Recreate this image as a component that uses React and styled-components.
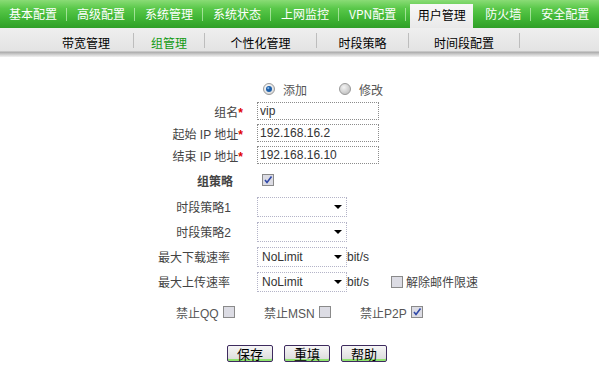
import React from 'react';
import styled, { createGlobalStyle } from 'styled-components';

const GlobalStyle = createGlobalStyle`
  body {
    margin: 0;
    background: #fff;
    font-family: "Liberation Sans", "Noto Sans CJK SC", sans-serif;
    font-size: 12px;
    color: #444;
  }
`;

const tabs = ['基本配置', '高级配置', '系统管理', '系统状态', '上网监控', 'VPN配置', '用户管理', '防火墙', '安全配置'];
const subs = [
  { name: '带宽管理', w: 133 },
  { name: '组管理', w: 70, on: true },
  { name: '个性化管理', w: 111 },
  { name: '时段策略', w: 91 },
  { name: '时间段配置', w: 110 },
];

export default function App() {
  return (
    <>
      <GlobalStyle />
      <TopBar>
        {tabs.map((t) =>
          t === '用户管理' ? (
            <ActiveTab key={t}>{t}</ActiveTab>
          ) : (
            <React.Fragment key={t}>
              <Tab $first={t === '防火墙'}>{t}</Tab>
              {t !== '安全配置' && <TabSep />}
            </React.Fragment>
          )
        )}
      </TopBar>
      <SubBar>
        {subs.map((s) => (
          <React.Fragment key={s.name}>
            <SubItem $w={s.w} $on={s.on}>{s.name}</SubItem>
            <SubSep />
          </React.Fragment>
        ))}
      </SubBar>

      <Form>
        <Row $h={18} $top={23}>
          <Label />
          <Controls $indent={20}>
            <Radio checked />
            <RadioText>添加</RadioText>
            <Spacer $w={32} />
            <Radio />
            <RadioText>修改</RadioText>
          </Controls>
        </Row>
        <Row $h={22} $top={2}>
          <Label>组名<Star>*</Star></Label>
          <Controls><TextInput defaultValue="vip" /></Controls>
        </Row>
        <Row $h={22}>
          <Label>起始 IP 地址<Star>*</Star></Label>
          <Controls><TextInput defaultValue="192.168.16.2" /></Controls>
        </Row>
        <Row $h={22}>
          <Label>结束 IP 地址<Star>*</Star></Label>
          <Controls><TextInput defaultValue="192.168.16.10" /></Controls>
        </Row>
        <Row $h={28}>
          <Label $pr={10} $bold>组策略</Label>
          <Controls $indent={19}><Check checked /></Controls>
        </Row>
        <Row $h={25}>
          <Label $pr={12}>时段策略1</Label>
          <Controls><Select value="" /></Controls>
        </Row>
        <Row $h={25}>
          <Label $pr={12}>时段策略2</Label>
          <Controls><Select value="" /></Controls>
        </Row>
        <Row $h={25}>
          <Label $pr={13}>最大下载速率</Label>
          <Controls>
            <Select value="NoLimit" />
            <Unit>bit/s</Unit>
          </Controls>
        </Row>
        <Row $h={25}>
          <Label $pr={13}>最大上传速率</Label>
          <Controls>
            <Select value="NoLimit" />
            <Unit>bit/s</Unit>
            <Spacer $w={22} />
            <Check />
            <CheckText>解除邮件限速</CheckText>
          </Controls>
        </Row>
        <BanRow>
          <BanItem>禁止QQ <Check /></BanItem>
          <BanItem>禁止MSN <Check /></BanItem>
          <BanItem>禁止P2P <Check checked /></BanItem>
        </BanRow>
        <ButtonRow>
          <Button>保存</Button>
          <Button>重填</Button>
          <Button>帮助</Button>
        </ButtonRow>
      </Form>
    </>
  );
}

function Radio({ checked }) {
  return (
    <svg width="12" height="12" viewBox="0 0 12 12">
      <defs>
        <radialGradient id={checked ? 'rOn' : 'rOff'} cx="40%" cy="35%" r="70%">
          <stop offset="0" stopColor={checked ? '#ffffff' : '#f4f4f4'} />
          <stop offset="1" stopColor={checked ? '#d6d6d6' : '#bdbdbd'} />
        </radialGradient>
      </defs>
      <circle cx="6" cy="6" r="5.5" fill={`url(#${checked ? 'rOn' : 'rOff'})`} stroke="#9a9a9a" />
      {checked && <circle cx="6" cy="6" r="3" fill="#1c5ea8" />}
      {checked && <circle cx="5.3" cy="5.2" r="1.1" fill="#7fb4e8" />}
    </svg>
  );
}

function Check({ checked }) {
  return (
    <CheckBox>
      {checked && (
        <svg width="10" height="10" viewBox="0 0 10 10">
          <path d="M2 5 L4 7.5 L8.5 1.5" fill="none" stroke="#2f48a8" strokeWidth="1.6" />
        </svg>
      )}
    </CheckBox>
  );
}

function Select({ value }) {
  return (
    <SelectBox>
      <span>{value}</span>
      <Arrow />
    </SelectBox>
  );
}

// CSS styles:

const TopBar = styled.div`
  display: flex;
  align-items: center;
  height: 28px;
  background: linear-gradient(#8adc76 0%, #5ac84a 30%, #40b535 65%, #2f9f27 100%);
`;

const Tab = styled.div`
  padding: 0 9px 0 ${(p) => (p.$first ? 10 : 10)}px;
  color: #fff;
  font-family: "Noto Sans CJK SC", sans-serif;
  font-size: 12px;
  line-height: 28px;
  white-space: nowrap;
  &:first-child {
    padding-left: 9px;
  }
`;

const TabSep = styled.div`
  width: 1px;
  height: 13px;
  background: rgba(230, 255, 220, 0.55);
`;

const ActiveTab = styled.div`
  align-self: stretch;
  display: flex;
  align-items: center;
  justify-content: center;
  margin: 4px 2px 0 4px;
  padding-bottom: 4px;
  width: 63px;
  box-sizing: border-box;
  background: linear-gradient(#f8f8f8, #e9e9e9);
  color: #000;
  font-family: "Noto Sans CJK SC", sans-serif;
  font-size: 12px;
`;

const SubBar = styled.div`
  display: flex;
  align-items: center;
  height: 29px;
  background: linear-gradient(
    to bottom,
    #efefef 0,
    #e3e3e3 23px,
    #aaaaaa 24px,
    #c9c9c9 26px,
    #f2f2f2 29px
  );
`;

const SubItem = styled.div`
  width: ${(p) => p.$w}px;
  padding-left: ${(p) => (p.$w > 120 ? 39 : 0)}px;
  box-sizing: border-box;
  text-align: center;
  padding-bottom: 1px;
  color: ${(p) => (p.$on ? '#129a12' : '#000')};
  font-family: "Noto Sans CJK SC", sans-serif;
  font-size: 12px;
`;

const SubSep = styled.div`
  width: 1px;
  height: 15px;
  margin-bottom: 4px;
  background: #bdbdbd;
`;

const Form = styled.div`
  display: flex;
  flex-direction: column;
`;

const Row = styled.div`
  display: flex;
  align-items: center;
  height: ${(p) => p.$h}px;
  margin-top: ${(p) => p.$top || 0}px;
`;

const Label = styled.div`
  width: 243px;
  box-sizing: border-box;
  padding-right: ${(p) => p.$pr || 0}px;
  text-align: right;
  white-space: nowrap;
  color: #444;
  font-weight: ${(p) => (p.$bold ? 'bold' : 'normal')};
`;

const Star = styled.span`
  color: #e00000;
  font-weight: bold;
`;

const Controls = styled.div`
  display: flex;
  align-items: center;
  margin-left: ${(p) => p.$indent || 14}px;
`;

const Spacer = styled.div`
  width: ${(p) => p.$w}px;
`;

const RadioText = styled.span`
  margin-left: 8px;
  color: #555;
`;

const TextInput = styled.input`
  width: 122px;
  height: 18px;
  box-sizing: border-box;
  border: 1px dotted #8c8c8c;
  padding: 0 2px;
  font-family: "Liberation Sans", sans-serif;
  font-size: 12px;
  color: #333;
  outline: none;
`;

const SelectBox = styled.div`
  display: flex;
  align-items: center;
  width: 90px;
  height: 20px;
  box-sizing: border-box;
  border: 1px dotted #b4b4c8;
  padding: 0 4px;
  color: #333;
  font-size: 12px;
`;

const Arrow = styled.span`
  margin-left: auto;
  width: 0;
  height: 0;
  border-left: 4px solid transparent;
  border-right: 4px solid transparent;
  border-top: 4px solid #000;
`;

const Unit = styled.span`
  color: #333;
  margin-left: 0;
`;

const CheckBox = styled.span`
  display: inline-flex;
  align-items: center;
  justify-content: center;
  width: 12px;
  height: 12px;
  box-sizing: border-box;
  border: 1px solid #8a8a8a;
  background: #dcdce4;
  vertical-align: middle;
`;

const CheckText = styled.span`
  margin-left: 3px;
  color: #444;
`;

const BanRow = styled.div`
  display: flex;
  align-items: center;
  gap: 29px;
  height: 36px;
  padding-left: 176px;
`;

const BanItem = styled.span`
  display: flex;
  align-items: center;
  gap: 4px;
  color: #555;
  white-space: pre;
  word-spacing: -3px;
`;

const ButtonRow = styled.div`
  display: flex;
  gap: 11px;
  margin-top: 15px;
  padding-left: 227px;
`;

const Button = styled.button`
  width: 46px;
  height: 17px;
  padding: 0;
  border: 1px solid #3e2b5e;
  border-radius: 2px;
  background: linear-gradient(#f6f6f6, #dadada);
  box-shadow: inset 0 -2px 0 #8ee26e;
  color: #000;
  font-family: "Noto Sans CJK SC", sans-serif;
  font-size: 13px;
  line-height: 14px;
`;
